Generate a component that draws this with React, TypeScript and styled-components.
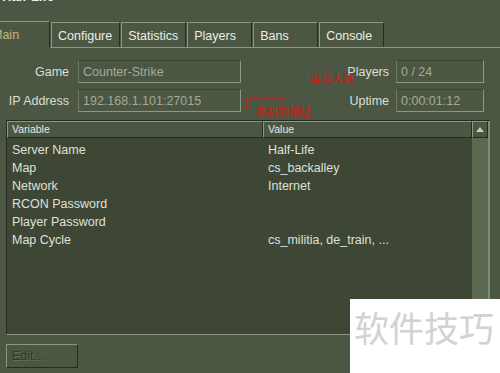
import React from "react";
import styled, { createGlobalStyle } from "styled-components";

const light = "#8c9882";
const dark = "#262c20";

const GlobalStyle = createGlobalStyle`
  html, body { margin: 0; padding: 0; background: #4c5743; }
  body { font-family: "Liberation Sans", Arial, sans-serif; }
`;

const Window = styled.div`
  position: relative;
  width: 500px;
  height: 373px;
  overflow: hidden;
  background: #4c5743;
  color: #e2e4dc;
  font-size: 12.5px;
`;

const TitleBar = styled.div`
  display: flow-root;
  height: 21px;
  padding-left: 2px;
  font-size: 13px;
  font-weight: bold;
  line-height: 13px;
  color: #f0f0f0;
  & span { display: block; margin-top: -10px; }
`;

const TabRow = styled.div`
  display: flex;
  align-items: flex-end;
  height: 27px;
  margin-left: -15px;
  border-bottom: 1px solid ${light};
  box-sizing: border-box;
`;

const Tab = styled.div<{ $active?: boolean }>`
  box-sizing: border-box;
  height: ${(p) => (p.$active ? "27px" : "25px")};
  min-width: 65px;
  padding: 0 7px 0 6px;
  margin-right: 1px;
  margin-bottom: ${(p) => (p.$active ? "-1px" : "0")};
  display: flex;
  align-items: center;
  border-top: 1px solid ${light};
  border-left: 1px solid ${light};
  border-right: 1px solid ${dark};
  background: #4c5743;
  color: ${(p) => (p.$active ? "#c8b77c" : "#eceee6")};
  font-size: 12.5px;
  padding-top: ${(p) => (p.$active ? "0" : "1px")};
`;

const Panel = styled.div`
  padding: 12px 16px 0 6px;
`;

const Form = styled.div`
  display: grid;
  grid-template-columns: 63px 163px 1fr 60px 88px;
  column-gap: 9px;
  row-gap: 6px;
  align-items: center;
  & > :nth-child(5n + 4) { margin-right: -2px; }
`;

const Label = styled.div`
  text-align: right;
  color: #dcdfd6;
  font-size: 12.5px;
`;

const Field = styled.div`
  box-sizing: border-box;
  height: 23px;
  padding: 0 4px;
  display: flex;
  align-items: center;
  border: 1px solid ${light};
  border-top-color: #3a4232;
  border-left-color: #6f7a66;
  color: #a3aa99;
  font-size: 12.5px;
`;

const Table = styled.div`
  margin-top: 8px;
  width: 484px;
  height: 215px;
  box-sizing: border-box;
  border-top: 1px solid ${dark};
  border-left: 1px solid ${dark};
  border-bottom: 1px solid ${light};
  display: grid;
  grid-template-columns: 1fr 18px;
  background: #3e4636;
`;

const Body = styled.div`
  display: flex;
  flex-direction: column;
`;

const HeaderRow = styled.div`
  display: grid;
  grid-template-columns: 256px 1fr;
  height: 17px;
`;

const HeaderCell = styled.div`
  box-sizing: border-box;
  background: #4c5743;
  border-top: 1px solid ${light};
  border-left: 1px solid ${light};
  border-right: 1px solid ${dark};
  border-bottom: 1px solid ${dark};
  padding-left: 4px;
  font-size: 10.5px;
  line-height: 15px;
  color: #e6e8e0;
`;

const Rows = styled.div`
  padding-top: 3px;
`;

const Row = styled.div`
  display: grid;
  grid-template-columns: 256px 1fr;
  height: 18px;
  line-height: 18px;
  font-size: 12.5px;
  color: #dfe1d8;
  & > div { padding-left: 5px; }
`;

const Scrollbar = styled.div`
  display: flex;
  flex-direction: column;
  background: #5b6951;
  border-right: 2px solid #7f8d74;
`;

const ScrollButton = styled.div`
  box-sizing: border-box;
  height: 17px;
  background: #4c5743;
  border-top: 1px solid ${light};
  border-left: 1px solid ${light};
  border-right: 1px solid ${dark};
  border-bottom: 1px solid ${dark};
  display: flex;
  align-items: center;
  justify-content: center;
`;

const Button = styled.div`
  margin-top: 9px;
  box-sizing: border-box;
  width: 72px;
  height: 24px;
  border-top: 1px solid ${light};
  border-left: 1px solid ${light};
  border-right: 1px solid ${dark};
  border-bottom: 1px solid ${dark};
  padding: 0 5px;
  display: flex;
  align-items: center;
  color: #2f3628;
  text-shadow: 1px 1px 0 #647059;
  font-size: 12.5px;
`;

const Note = styled.div<{ $x: number; $y: number }>`
  position: absolute;
  left: ${(p) => p.$x}px;
  top: ${(p) => p.$y}px;
  color: #c8211c;
  font-family: "Noto Sans CJK SC", sans-serif;
  font-size: 11px;
  font-weight: bold;
  line-height: 13px;
  opacity: 0.85;
`;

const Arrow = styled.svg`
  position: absolute;
  left: 243px;
  top: 92px;
`;

const Watermark = styled.div`
  position: absolute;
  left: 350px;
  top: 299px;
  width: 150px;
  height: 74px;
  background: #ffffff;
  box-sizing: border-box;
  padding: 6px 0 0 4px;
  color: #d2d2d2;
  font-family: "Noto Sans CJK SC", sans-serif;
  font-size: 35px;
  line-height: 44px;
  white-space: nowrap;
`;

const rows: [string, string][] = [
  ["Server Name", "Half-Life"],
  ["Map", "cs_backalley"],
  ["Network", "Internet"],
  ["RCON Password", ""],
  ["Player Password", ""],
  ["Map Cycle", "cs_militia, de_train, ..."],
];

const tabs = ["Configure", "Statistics", "Players", "Bans", "Console"];

export default function App() {
  return (
    <>
      <GlobalStyle />
      <Window>
        <TitleBar>
          <span>Half-Life</span>
        </TitleBar>
        <TabRow>
          <Tab $active>Main</Tab>
          {tabs.map((t) => (
            <Tab key={t}>{t}</Tab>
          ))}
        </TabRow>
        <Panel>
          <Form>
            <Label>Game</Label>
            <Field>Counter-Strike</Field>
            <div />
            <Label>Players</Label>
            <Field>0 / 24</Field>
            <Label>IP Address</Label>
            <Field>192.168.1.101:27015</Field>
            <div />
            <Label>Uptime</Label>
            <Field>0:00:01:12</Field>
          </Form>
          <Table>
            <Body>
              <HeaderRow>
                <HeaderCell>Variable</HeaderCell>
                <HeaderCell>Value</HeaderCell>
              </HeaderRow>
              <Rows>
                {rows.map(([k, v]) => (
                  <Row key={k}>
                    <div>{k}</div>
                    <div>{v}</div>
                  </Row>
                ))}
              </Rows>
            </Body>
            <Scrollbar>
              <ScrollButton>
                <svg width="8" height="5" viewBox="0 0 8 5">
                  <path d="M4 0 L8 5 L0 5 Z" fill="#c9cfc0" />
                </svg>
              </ScrollButton>
            </Scrollbar>
          </Table>
          <Button>Edit...</Button>
        </Panel>
        <Note $x={310} $y={72}>当前人数</Note>
        <Arrow width="45" height="20" viewBox="0 0 45 20">
          <path d="M42 6 L8 6 M8 6 Q2 8 3 13 L4 18" stroke="#c8211c" strokeWidth="1.4" fill="none" />
        </Arrow>
        <Note $x={256} $y={105}>本机的地址</Note>
        <Watermark>软件技巧</Watermark>
      </Window>
    </>
  );
}
